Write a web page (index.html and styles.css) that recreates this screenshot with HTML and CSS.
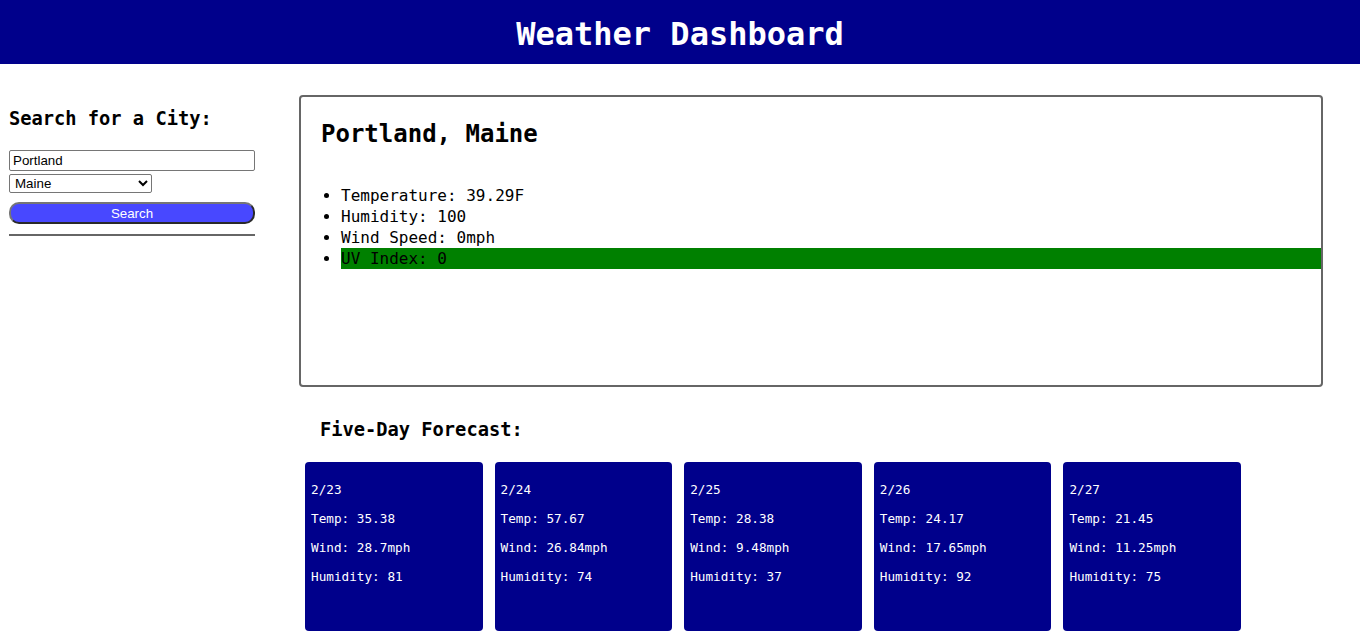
FILE: index.html
```html
<!DOCTYPE html>
<html lang="en">
<head>
<meta charset="utf-8">
<title>Weather Dashboard</title>
<link rel="stylesheet" href="styles.css">
</head>
<body>
<header class="topbar">
  <h1 class="title">Weather Dashboard</h1>
</header>
<div class="layout">
  <aside class="sidebar">
    <h3 class="side-heading">Search for a City:</h3>
    <form class="search-form">
      <input class="city-input" type="text" value="Portland">
      <select class="state-select">
        <option selected>Maine</option>
        <option>Oregon</option>
      </select>
      <button class="search-btn" type="button">Search</button>
    </form>
    <hr class="divider">
  </aside>
  <main class="content">
    <section class="current">
      <h2 class="city-name">Portland, Maine</h2>
      <ul class="stats">
        <li>Temperature: 39.29F</li>
        <li>Humidity: 100</li>
        <li>Wind Speed: 0mph</li>
        <li><span class="uv">UV Index: 0</span></li>
      </ul>
    </section>
    <h3 class="forecast-heading">Five-Day Forecast:</h3>
    <div class="cards">
      <div class="card"><p>2/23</p><p>Temp: 35.38</p><p>Wind: 28.7mph</p><p>Humidity: 81</p></div>
      <div class="card"><p>2/24</p><p>Temp: 57.67</p><p>Wind: 26.84mph</p><p>Humidity: 74</p></div>
      <div class="card"><p>2/25</p><p>Temp: 28.38</p><p>Wind: 9.48mph</p><p>Humidity: 37</p></div>
      <div class="card"><p>2/26</p><p>Temp: 24.17</p><p>Wind: 17.65mph</p><p>Humidity: 92</p></div>
      <div class="card"><p>2/27</p><p>Temp: 21.45</p><p>Wind: 11.25mph</p><p>Humidity: 75</p></div>
    </div>
  </main>
</div>
</body>
</html>
```
FILE: styles.css
```css
html, body {
  margin: 0;
  padding: 0;
  background: #ffffff;
}
body {
  font-family: "DejaVu Sans Mono", "Liberation Mono", monospace;
  color: #000;
}
.topbar {
  background: #00008b;
  height: 64px;
  display: flex;
  align-items: center;
  justify-content: center;
}
.title {
  margin: 0;
  color: #fff;
  font-size: 32px;
  font-weight: bold;
  line-height: 38px;
  padding-top: 3px;
}
.layout {
  display: flex;
  align-items: flex-start;
  padding-top: 31px;
}
.sidebar {
  width: 246px;
  margin-left: 9px;
  flex: none;
}
.side-heading {
  font-size: 18.72px;
  line-height: 22px;
  margin: 13px 0 0;
}
.search-form {
  display: flex;
  flex-direction: column;
  align-items: flex-start;
  margin-top: 20px;
}
.city-input {
  box-sizing: border-box;
  width: 246px;
  height: 21px;
  margin: 0;
  padding: 1px 3px;
  font-family: "Liberation Sans", Arial, sans-serif;
  font-size: 13.33px;
  border: 1px solid #767676;
  border-radius: 2px;
}
.state-select {
  box-sizing: border-box;
  width: 143px;
  height: 19px;
  margin: 3px 0 0;
  padding: 0 1px;
  font-family: "Liberation Sans", Arial, sans-serif;
  font-size: 13.33px;
  border: 1px solid #767676;
  border-radius: 2px;
  background: #fff;
}
.search-btn {
  box-sizing: border-box;
  width: 246px;
  height: 22px;
  margin-top: 9px;
  padding: 0;
  background: #4848ff;
  color: #fff;
  font-family: "Liberation Sans", Arial, sans-serif;
  font-size: 13.33px;
  border: 2px solid;
  border-color: #767676 #2a2a2a #2a2a2a #767676;
  border-radius: 10px;
}
.divider {
  margin: 10px 0 0;
  border: 0;
  height: 2px;
  background: #666;
}
.content {
  margin-left: 44px;
  width: 1024px;
  flex: none;
}
.current {
  box-sizing: border-box;
  height: 292px;
  border: 2px solid #666;
  border-radius: 4px;
  padding: 23px 0 0 20px;
}
.city-name {
  margin: 0;
  font-size: 24px;
  line-height: 28px;
}
.stats {
  margin: 37px 0 0;
  padding-left: 20px;
  font-size: 16px;
  line-height: 21px;
}
.uv {
  display: block;
  background: #008000;
}
.forecast-heading {
  font-size: 18.72px;
  line-height: 22px;
  margin: 32px 0 0 21px;
}
.cards {
  display: flex;
  gap: 12px;
  margin: 21px 0 0 6px;
}
.card {
  box-sizing: border-box;
  width: 177.6px;
  height: 169px;
  background: #00008b;
  color: #fff;
  border-radius: 4px;
  padding: 6px;
  font-size: 12.7px;
  line-height: 15px;
}
.card p {
  margin: 14px 0;
}
```
